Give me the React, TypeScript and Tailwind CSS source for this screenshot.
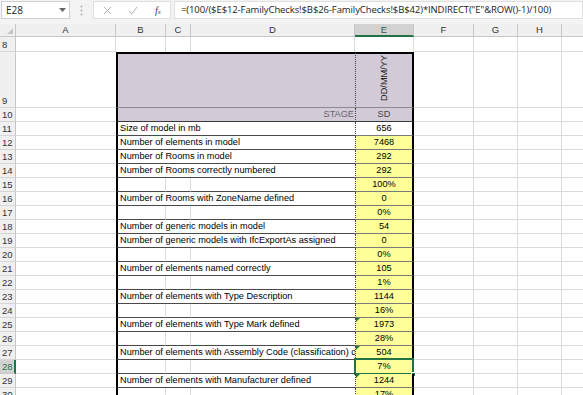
import React from "react";

type R = { n: number; label?: string; v: string; y?: boolean; tri?: boolean; sel?: boolean };

const rows: R[] = [
  { n: 11, label: "Size of model in mb", v: "656", y: false },
  { n: 12, label: "Number of elements in model", v: "7468", y: true },
  { n: 13, label: "Number of Rooms in model", v: "292", y: true },
  { n: 14, label: "Number of Rooms correctly numbered", v: "292", y: true },
  { n: 15, v: "100%", y: true },
  { n: 16, label: "Number of Rooms with ZoneName defined", v: "0", y: true },
  { n: 17, v: "0%", y: true },
  { n: 18, label: "Number of generic models in model", v: "54", y: true },
  { n: 19, label: "Number of generic models with IfcExportAs assigned", v: "0", y: true },
  { n: 20, v: "0%", y: true },
  { n: 21, label: "Number of elements named correctly", v: "105", y: true },
  { n: 22, v: "1%", y: true },
  { n: 23, label: "Number of elements with Type Description", v: "1144", y: true },
  { n: 24, v: "16%", y: true },
  { n: 25, label: "Number of elements with Type Mark defined", v: "1973", y: true, tri: true },
  { n: 26, v: "28%", y: true },
  { n: 27, label: "Number of elements with Assembly Code (classification) defined", v: "504", y: true, tri: true },
  { n: 28, v: "7%", y: true, sel: true },
  { n: 29, label: "Number of elements with Manufacturer defined", v: "1244", y: true, tri: true },
  { n: 30, v: "17%", y: true },
];

const GRID = "border-[#dcdcdc]";

function RowHead({ n, sel }: { n: number; sel?: boolean }) {
  return (
    <div
      className={
        "w-[16px] shrink-0 flex items-end pl-[2px] pb-[1px] border-b text-[9.5px] leading-[10px] " +
        (sel
          ? "bg-[#d2d2d2] text-[#217346] border-r-2 border-r-[#217346] border-b-[#c6c6c6]"
          : "bg-[#f0f0f0] text-[#333] border-r border-r-[#c6c6c6] border-b-[#d6d6d6]")
      }
    >
      {n}
    </div>
  );
}

function Rest() {
  return (
    <>
      <div className={"w-[60px] shrink-0 border-r border-b " + GRID} />
      <div className={"w-[44px] shrink-0 border-r border-b " + GRID} />
      <div className={"w-[44px] shrink-0 border-r border-b " + GRID} />
      <div className={"flex-1 border-b " + GRID} />
    </>
  );
}

const ECELL =
  "relative w-[59px] shrink-0 border-l [border-left-style:dotted] border-l-[#444] border-r-2 border-r-black border-b";

function DataRow({ r }: { r: R }) {
  return (
    <div className="flex h-[14px]">
      <RowHead n={r.n} sel={r.sel} />
      <div className={"w-[100px] shrink-0 border-b " + GRID} />
      {r.label ? (
        <div className="w-[239px] shrink-0 border-l-2 border-l-black border-b border-b-[#4a4a4a] pl-[2px] flex items-center overflow-hidden whitespace-nowrap text-[9.2px] text-black">
          {r.label}
        </div>
      ) : (
        <>
          <div className="w-[50px] shrink-0 border-l-2 border-l-black border-r border-r-[#dcdcdc] border-b border-b-[#4a4a4a]" />
          <div className="w-[25px] shrink-0 border-r border-r-[#dcdcdc] border-b border-b-[#4a4a4a]" />
          <div className="w-[164px] shrink-0 border-b border-b-[#4a4a4a]" />
        </>
      )}
      <div
        className={
          ECELL +
          " border-b-[#7a7a7a] flex items-center justify-center text-[9.2px] text-black " +
          (r.y ? "bg-[#ffff99]" : "bg-white")
        }
      >
        {r.v}
        {r.tri && (
          <div className="absolute left-0 top-0 w-0 h-0 border-t-[4px] border-t-[#1f7a3a] border-r-[4px] border-r-transparent" />
        )}
        {r.sel && (
          <>
            <div className="absolute left-[-2px] top-[-2px] right-[-2px] bottom-[-2px] border-2 border-[#217346]" />
            <div className="absolute right-[-4px] bottom-[-4px] w-[5px] h-[5px] bg-[#217346] border border-white" />
          </>
        )}
      </div>
      <Rest />
    </div>
  );
}

export default function App() {
  return (
    <div className="w-[583px] h-[395px] overflow-hidden bg-white font-['Liberation_Sans',Arial,sans-serif] text-black select-none">
      {/* Formula bar */}
      <div className="h-[24px] bg-[#f3f3f3] flex items-start pt-[1px]">
        <div className="ml-[1px] w-[69px] h-[18px] bg-white border border-[#d0d0d0] flex items-center justify-between pl-[4px] pr-[3px]">
          <span className="text-[10px] text-[#222] font-['Open_Sans',sans-serif]">E28</span>
          <svg width="7" height="4" viewBox="0 0 7 4">
            <path d="M0 0 L7 0 L3.5 4 Z" fill="#666" />
          </svg>
        </div>
        <div className="w-[23px] h-[18px] flex items-center justify-center">
          <svg width="3" height="11" viewBox="0 0 3 11">
            <circle cx="1.5" cy="1.5" r="1" fill="#b0b0b0" />
            <circle cx="1.5" cy="5.5" r="1" fill="#b0b0b0" />
            <circle cx="1.5" cy="9.5" r="1" fill="#b0b0b0" />
          </svg>
        </div>
        <div className="w-[78px] h-[18px] bg-white border border-[#e0e0e0] flex items-center">
          <div className="w-[26px] flex justify-center">
            <svg width="9" height="9" viewBox="0 0 9 9">
              <path d="M1 1 L8 8 M8 1 L1 8" stroke="#b3b3b3" strokeWidth="1" />
            </svg>
          </div>
          <div className="w-[26px] flex justify-center">
            <svg width="10" height="9" viewBox="0 0 10 9">
              <path d="M1 5 L3.8 8 L9 1" stroke="#b3b3b3" strokeWidth="1" fill="none" />
            </svg>
          </div>
          <div className="w-[24px] flex justify-center">
            <span className="font-['Liberation_Serif',serif] italic text-[10px] text-[#444]">
              f<span className="text-[7px]">x</span>
            </span>
          </div>
        </div>
        <div className="ml-[3px] flex-1 h-[18px] bg-white border border-[#e0e0e0] flex items-center pl-[6px] whitespace-nowrap overflow-hidden">
          <span className="text-[9.5px] text-[#222] font-['Open_Sans',sans-serif] tracking-[-0.1px]">
            =(100/($E$12-FamilyChecks!$B$26-FamilyChecks!$B$42)*INDIRECT("E"&amp;ROW()-1)/100)
          </span>
        </div>
      </div>

      {/* Column headers */}
      <div className="flex h-[13px] bg-[#f0f0f0] text-[9.5px] leading-[12px] text-[#333]">
        <div className="relative w-[16px] shrink-0 border-r border-b border-[#c6c6c6]">
          <div className="absolute right-[2px] bottom-[2px] w-0 h-0 border-b-[6px] border-b-[#c6c6c6] border-l-[6px] border-l-transparent" />
        </div>
        <div className="w-[100px] shrink-0 border-r border-b border-[#c6c6c6] text-center">A</div>
        <div className="w-[50px] shrink-0 border-r border-b border-[#c6c6c6] text-center">B</div>
        <div className="w-[25px] shrink-0 border-r border-b border-[#c6c6c6] text-center">C</div>
        <div className="w-[164px] shrink-0 border-r border-b border-[#c6c6c6] text-center">D</div>
        <div className="w-[59px] shrink-0 border-r border-r-[#c6c6c6] border-b-2 border-b-[#217346] bg-[#d2d2d2] text-center text-[#3a5a46]">E</div>
        <div className="w-[60px] shrink-0 border-r border-b border-[#c6c6c6] text-center">F</div>
        <div className="w-[44px] shrink-0 border-r border-b border-[#c6c6c6] text-center">G</div>
        <div className="w-[44px] shrink-0 border-r border-b border-[#c6c6c6] text-center">H</div>
        <div className="flex-1 border-b border-[#c6c6c6]" />
      </div>

      {/* Row 8 */}
      <div className="flex h-[15px]">
        <RowHead n={8} />
        <div className={"w-[100px] shrink-0 border-r border-b " + GRID} />
        <div className={"w-[50px] shrink-0 border-r " + GRID} />
        <div className={"w-[25px] shrink-0 border-r " + GRID} />
        <div className={"w-[164px] shrink-0 border-r " + GRID} />
        <div className={"w-[59px] shrink-0 border-r " + GRID} />
        <Rest />
      </div>

      {/* Row 9 */}
      <div className="flex h-[56px]">
        <RowHead n={9} />
        <div className={"w-[100px] shrink-0 border-b " + GRID} />
        <div className="w-[239px] shrink-0 bg-[#d2cad6] border-l-2 border-t-2 border-l-black border-t-black border-b border-b-[#8a8a8a]" />
        <div className={ECELL + " bg-[#d2cad6] border-t-2 border-t-black border-b-[#8a8a8a] flex items-end justify-center pb-[6px]"}>
          <span className="[writing-mode:vertical-rl] rotate-180 text-[9.2px] leading-[10px] text-[#222]">DD/MM/YY</span>
        </div>
        <Rest />
      </div>

      {/* Row 10 */}
      <div className="flex h-[14px]">
        <RowHead n={10} />
        <div className={"w-[100px] shrink-0 border-b " + GRID} />
        <div className="w-[239px] shrink-0 bg-[#d2cad6] border-l-2 border-l-black border-b border-b-[#3a3a3a] flex items-center justify-end pr-[1px] text-[9.2px] text-[#666]">
          STAGE
        </div>
        <div className={ECELL + " bg-[#d2cad6] border-b-[#3a3a3a] flex items-center justify-center text-[9.2px] text-[#444]"}>
          SD
        </div>
        <Rest />
      </div>

      {rows.map((r) => (
        <DataRow key={r.n} r={r} />
      ))}
    </div>
  );
}
